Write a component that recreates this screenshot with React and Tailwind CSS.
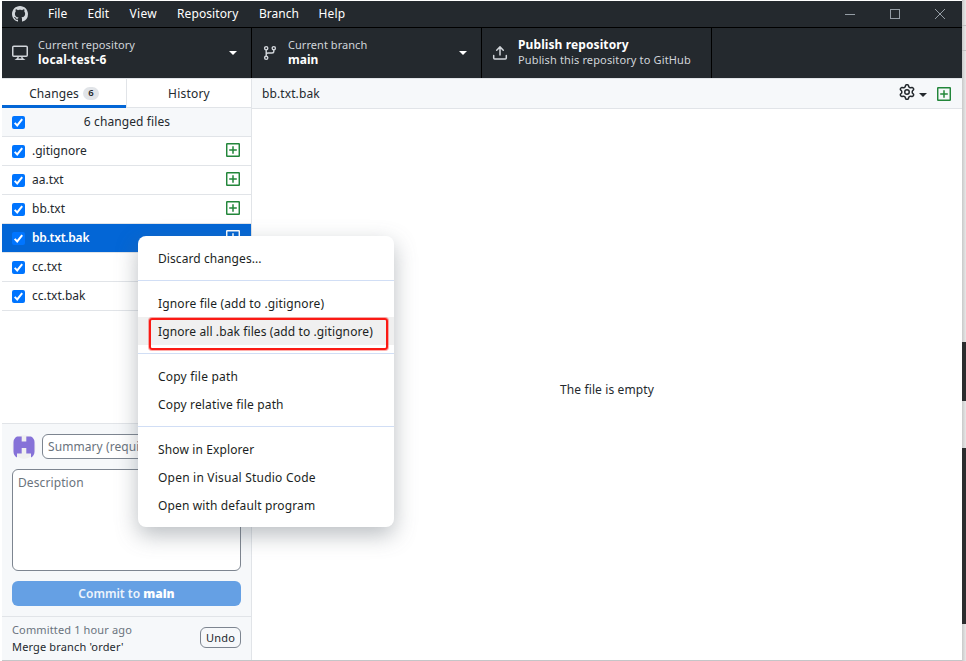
import React from 'react';

const GITHUB =
  'M8 0C3.58 0 0 3.58 0 8c0 3.54 2.29 6.53 5.47 7.59.4.07.55-.17.55-.38 0-.19-.01-.82-.01-1.49-2.01.37-2.53-.49-2.69-.94-.09-.23-.48-.94-.82-1.13-.28-.15-.68-.52-.01-.53.63-.01 1.08.58 1.23.82.72 1.21 1.87.87 2.33.66.07-.52.28-.87.51-1.07-1.78-.2-3.64-.89-3.64-3.95 0-.87.31-1.59.82-2.15-.08-.2-.36-1.02.08-2.12 0 0 .67-.21 2.2.82.64-.18 1.32-.27 2-.27.68 0 1.36.09 2 .27 1.53-1.04 2.2-.82 2.2-.82.44 1.1.16 1.92.08 2.12.51.56.82 1.27.82 2.15 0 3.07-1.87 3.75-3.65 3.95.29.25.54.73.54 1.48 0 1.07-.01 1.93-.01 2.2 0 .21.15.46.55.38A8.013 8.013 0 0016 8c0-4.42-3.58-8-8-8z';

const GEAR =
  'M8 0a8.2 8.2 0 0 1 .701.031C9.444.095 9.99.645 10.16 1.29l.288 1.107c.018.066.079.158.212.224.231.114.454.243.668.386.123.082.233.09.299.071l1.103-.303c.644-.176 1.392.021 1.82.63.27.385.506.792.704 1.218.315.675.111 1.422-.364 1.891l-.814.806c-.049.048-.098.147-.088.294.016.257.016.515 0 .772-.01.147.038.246.088.294l.814.806c.475.469.679 1.216.364 1.891a7.977 7.977 0 0 1-.704 1.217c-.428.61-1.176.807-1.82.63l-1.102-.302c-.067-.019-.177-.011-.3.071a5.909 5.909 0 0 1-.668.386c-.133.066-.194.158-.211.224l-.29 1.106c-.168.646-.715 1.196-1.458 1.26a8.006 8.006 0 0 1-1.402 0c-.743-.064-1.289-.614-1.458-1.26l-.289-1.106c-.018-.066-.079-.158-.212-.224a5.738 5.738 0 0 1-.668-.386c-.123-.082-.233-.09-.299-.071l-1.103.303c-.644.176-1.392-.021-1.82-.63a8.12 8.12 0 0 1-.704-1.218c-.315-.675-.111-1.422.363-1.891l.815-.806c.05-.048.098-.147.088-.294a6.214 6.214 0 0 1 0-.772c.01-.147-.038-.246-.088-.294l-.815-.806C.635 6.045.431 5.298.746 4.623a7.92 7.92 0 0 1 .704-1.217c.428-.61 1.176-.807 1.82-.63l1.102.302c.067.019.177.011.3-.071.214-.143.437-.272.668-.386.133-.066.194-.158.211-.224l.29-1.106C6.009.645 6.556.095 7.299.03 7.53.01 7.764 0 8 0Zm-.571 1.525c-.036.003-.108.036-.137.146l-.289 1.105c-.147.561-.549.967-.998 1.189-.173.086-.34.183-.5.29-.417.278-.97.423-1.529.27l-1.103-.303c-.109-.03-.175.016-.195.045-.22.312-.412.644-.573.99-.014.031-.021.11.059.19l.815.806c.411.406.562.957.53 1.456a4.709 4.709 0 0 0 0 .582c.032.499-.119 1.05-.53 1.456l-.815.806c-.081.08-.073.159-.059.19.162.346.353.677.573.989.02.03.085.076.195.046l1.102-.303c.56-.153 1.113-.008 1.53.27.161.107.328.204.501.29.447.222.85.629.997 1.189l.289 1.105c.029.109.101.143.137.146a6.6 6.6 0 0 0 1.142 0c.036-.003.108-.036.137-.146l.289-1.105c.147-.561.549-.967.998-1.189.173-.086.34-.183.5-.29.417-.278.97-.423 1.529-.27l1.103.303c.109.029.175-.016.195-.045.22-.313.411-.644.573-.99.014-.031.021-.11-.059-.19l-.815-.806c-.411-.406-.562-.957-.53-1.456a4.709 4.709 0 0 0 0-.582c-.032-.499.119-1.05.53-1.456l.815-.806c.081-.08.073-.159.059-.19a6.464 6.464 0 0 0-.573-.989c-.02-.03-.085-.076-.195-.046l-1.102.303c-.56.153-1.113.008-1.53-.27a4.44 4.44 0 0 0-.501-.29c-.447-.222-.85-.629-.997-1.189l-.289-1.105c-.029-.11-.101-.143-.137-.146a6.6 6.6 0 0 0-1.142 0ZM11 8a3 3 0 1 1-6 0 3 3 0 0 1 6 0ZM9.5 8a1.5 1.5 0 1 0-3.001.001A1.5 1.5 0 0 0 9.5 8Z';

function Caret() {
  return (
    <svg width="8" height="4" viewBox="0 0 8 4" fill="currentColor" className="block shrink-0">
      <path d="M0 0h8L4 4z" />
    </svg>
  );
}

function Added() {
  return (
    <svg width="14" height="14" viewBox="0 0 14 14" fill="none" stroke="currentColor" className="block shrink-0">
      <rect x="0.7" y="0.7" width="12.6" height="12.6" rx="0.8" strokeWidth="1.5" />
      <path d="M7 3.2v7.6M3.2 7h7.6" strokeWidth="1.5" />
    </svg>
  );
}

function Check() {
  return (
    <span className="flex size-[13px] shrink-0 items-center justify-center rounded-[2px] bg-[#0075ff]">
      <svg width="13" height="13" viewBox="0 0 13 13" fill="none" stroke="#fff" strokeWidth="2">
        <path d="M2.7 6.9l2.5 2.5 5-6.3" />
      </svg>
    </span>
  );
}

const menus = [
  ['File', 'w-[39.5px]'],
  ['Edit', 'w-[42px]'],
  ['View', 'w-[47.5px] tracking-[0.3px]'],
  ['Repository', 'w-[82px] tracking-[0.1px]'],
  ['Branch', 'w-[59.5px]'],
  ['Help', 'w-[40px] tracking-[0.2px]'],
];

const files = [
  { name: '.gitignore' },
  { name: 'aa.txt' },
  { name: 'bb.txt' },
  { name: 'bb.txt.bak', selected: true },
  { name: 'cc.txt' },
  { name: 'cc.txt.bak' },
];

const groups = [
  [['Discard changes...', 'tracking-[0.08px]']],
  [
    ['Ignore file (add to .gitignore)', 'tracking-[0.13px]'],
    ['Ignore all .bak files (add to .gitignore)', 'tracking-[0.1px]', true],
  ],
  [
    ['Copy file path', 'tracking-[0.2px]'],
    ['Copy relative file path', 'tracking-[0.16px]'],
  ],
  [
    ['Show in Explorer', 'tracking-[0.12px]'],
    ['Open in Visual Studio Code', 'tracking-[0.21px]'],
    ['Open with default program', 'tracking-[0.14px]'],
  ],
];

function TitleBar() {
  return (
    <div className="flex h-[27px] shrink-0 items-center border-b border-black bg-[#24292e] text-[12px] text-white">
      <svg width="16" height="16" viewBox="0 0 16 16" fill="#d1d5da" className="ml-[10px] mr-5 shrink-0">
        <path d={GITHUB} />
      </svg>
      {menus.map(([label, w]) => (
        <span key={label} className={`${w} shrink-0 whitespace-nowrap`}>
          {label}
        </span>
      ))}
      <svg width="102" height="12" viewBox="0 0 102 12" fill="none" stroke="#959da5" className="mb-px ml-auto mr-4">
        <path d="M1 6.5h10M91 1l10 10M101 1l-10 10" />
        <rect x="46.5" y="1.5" width="9" height="9" />
      </svg>
    </div>
  );
}

function Toolbar() {
  return (
    <div className="flex h-[50px] shrink-0 bg-[#24292e] text-[11px] leading-[15px] text-[#d1d5da]">
      <div className="flex w-[250px] items-center border-r border-black pl-[10px] pr-[14px]">
        <svg width="16" height="16" viewBox="0 0 16 16" fill="none" stroke="currentColor" strokeWidth="1.5" className="mr-[10px] shrink-0">
          <rect x="0.75" y="1.25" width="14.5" height="10" rx="1" />
          <path d="M6.3 11.5c0 1.3-.4 1.9-1.6 2.8h6.6c-1.2-.9-1.6-1.5-1.6-2.8" />
        </svg>
        <div className="mb-[2px] flex-1">
          <div className="tracking-[0.1px]">Current repository</div>
          <div className="text-[12px] font-bold tracking-[0.2px] text-white">local-test-6</div>
        </div>
        <span className="text-white"><Caret /></span>
      </div>
      <div className="flex w-[230px] items-center border-r border-black pl-[10px] pr-[14px]">
        <svg width="16" height="16" viewBox="0 0 16 16" fill="none" stroke="currentColor" strokeWidth="1.4" className="mr-[10px] shrink-0">
          <circle cx="4.2" cy="3.2" r="1.6" />
          <circle cx="11.8" cy="3.2" r="1.6" />
          <circle cx="4.2" cy="12.8" r="1.6" />
          <path d="M4.2 4.8v6.4M11.8 4.8v1.4a1.8 1.8 0 0 1-1.8 1.8H6a1.8 1.8 0 0 0-1.8 1.8" />
        </svg>
        <div className="mb-[2px] flex-1">
          <div className="tracking-[0.05px]">Current branch</div>
          <div className="text-[12px] font-bold text-white">main</div>
        </div>
        <span className="text-white"><Caret /></span>
      </div>
      <div className="flex w-[230px] items-center border-r border-black pl-[10px]">
        <svg width="16" height="16" viewBox="0 0 16 16" fill="none" stroke="currentColor" strokeWidth="1.5" strokeLinecap="round" strokeLinejoin="round" className="mr-[10px] shrink-0">
          <path d="M8 10V2.2M4.7 5.2L8 1.9l3.3 3.3M1.7 10.5v2.6c0 .6.4 1 1 1h10.6c.6 0 1-.4 1-1v-2.6" />
        </svg>
        <div className="mb-[2px]">
          <div className="pt-px text-[12px] font-bold leading-[14px] tracking-[0.1px] text-white">Publish repository</div>
          <div className="tracking-[0.14px]">Publish this repository to GitHub</div>
        </div>
      </div>
    </div>
  );
}

function Sidebar() {
  return (
    <div className="flex w-[250px] shrink-0 flex-col border-r border-[#e1e4e8] bg-white">
      <div className="flex h-[30px] shrink-0 border-t border-[#e1e4e8]">
        <div className="flex w-[124px] items-center justify-center gap-1 border-b-[3px] border-[#0366d6] pt-[3px]">
          <span className="tracking-[0.1px]">Changes</span>
          <span className="flex h-[13px] w-4 items-center justify-center rounded-full bg-[#e1e4e8] text-[9.5px] font-semibold">6</span>
        </div>
        <div className="flex flex-1 items-center justify-center border-b border-l border-[#e1e4e8] pt-[2px] tracking-[0.2px]">History</div>
      </div>
      <div className="flex h-[29px] shrink-0 items-center border-b border-[#e1e4e8] bg-[#f6f8fa] pl-[10px]">
        <Check />
        <span className="flex-1 pr-[22px] text-center tracking-[0.1px]">6 changed files</span>
      </div>
      {files.map((f) => (
        <div
          key={f.name}
          className={`flex h-[29px] shrink-0 items-center border-b border-[#e1e4e8] pl-[10px] pr-[11px] ${
            f.selected ? 'bg-[#0366d6] font-semibold text-white' : ''
          }`}
        >
          <Check />
          <span className={`ml-[7px] flex-1 ${f.selected ? 'tracking-[-0.25px]' : ''}`}>{f.name}</span>
          <span className={`mb-[2px] ${f.selected ? 'text-white' : 'text-[#22863a]'}`}>
            <Added />
          </span>
        </div>
      ))}
      <div className="flex-1" />
      <CommitForm />
      <div className="flex h-[44px] shrink-0 items-center justify-between border-t border-[#e1e4e8] bg-[#f6f8fa] pl-[10px] pr-[10px]">
        <div className="mb-px text-[11px] leading-[17px]">
          <div className="tracking-[0.14px] text-[#6a737d]">Committed 1 hour ago</div>
          <div className="tracking-[0.15px]">Merge branch 'order'</div>
        </div>
        <div className="mb-[2px] flex h-[21px] w-[41px] items-center justify-center rounded-[6px] border border-[#7d8590] bg-[#f6f8fa] pt-px text-[11px] tracking-[0.2px]">Undo</div>
      </div>
    </div>
  );
}

function CommitForm() {
  return (
    <div className="flex h-[193px] shrink-0 flex-col border-t border-[#e1e4e8] bg-[#f6f8fa] px-[10px] pt-[10px] text-[#6a737d]">
      <div className="flex shrink-0 items-center gap-[6px]">
        <svg width="24" height="24" viewBox="0 0 24 24" className="shrink-0">
          <circle cx="12" cy="12" r="11.7" fill="#f0f0f0" />
          <path d="M5 1.500H9.700V6.500H14.300V1.500H19q3.500 2 3.500 5.500v9.500q0 4-3.500 6V18.500h-4.700V13H9.700v5.500H5v4q-3.500-2-3.500-6V7q0-3.500 3.500-5.500z" fill="#8672d8" />
        </svg>
        <div className="flex h-[25px] flex-1 items-center overflow-hidden whitespace-nowrap rounded-[6px] border border-[#7d8590] bg-white pl-[5px] tracking-[0.08px]">
          Summary (required)
        </div>
      </div>
      <div className="mt-[10px] h-[102px] shrink-0 rounded-[6px] border border-[#7d8590] bg-white pl-[5px] pt-[4px] leading-[18px] tracking-[0.1px]">
        Description
      </div>
      <div className="mt-[10px] flex h-[25px] shrink-0 items-center justify-center rounded-[6px] bg-[#65a0e4] font-semibold text-[#edf4fc]">
        <span>
          Commit to <b className="text-white">main</b>
        </span>
      </div>
    </div>
  );
}

function DiffPane() {
  return (
    <div className="flex flex-1 flex-col bg-white">
      <div className="flex h-[31px] shrink-0 items-center border-b border-t border-[#e1e4e8] bg-[#f6f8fa] pl-[10px] pr-[11px]">
        <span className="flex-1 tracking-[0.1px]">bb.txt.bak</span>
        <svg width="16" height="16" viewBox="0 0 16 16" fill="#24292e" className="mb-[3px]">
          <path d={GEAR} />
        </svg>
        <span className="ml-[4px] mr-[10px] mt-[3px]"><Caret /></span>
        <span className="text-[#22863a]"><Added /></span>
      </div>
      <div className="flex flex-1 items-center justify-center pt-[10px] tracking-[0.12px]">The file is empty</div>
    </div>
  );
}

function ContextMenu() {
  return (
    <div className="absolute left-[138px] top-[236px] w-[256px] rounded-[8px] bg-white text-[12px] text-[#1b1f23] shadow-[0_8px_22px_rgba(90,100,110,0.42)]">
      {groups.map((items, i) => (
        <div key={i} className={`py-2 ${i ? 'border-t border-[#d1def5]' : ''}`}>
          {items.map(([label, track, active]) => (
            <div key={label} className={`flex h-7 items-center whitespace-nowrap pl-5 pt-[2px] ${track} ${active ? 'bg-[#f0f0f0]' : ''}`}>
              {label}
            </div>
          ))}
        </div>
      ))}
      <div className="absolute left-[11px] top-[82px] h-[32px] w-[239px] rounded-[3px] border-2 border-[#fb1a14] shadow-[0_0_0_1px_rgba(251,26,20,0.35)]" />
    </div>
  );
}

export default function App() {
  return (
    <div className="relative flex h-[661px] w-[966px] overflow-hidden bg-white pl-[2px] pt-px text-[12px] text-[#24292e] [font-family:'Noto_Sans','Open_Sans',sans-serif]">
      <div className="flex h-[660px] w-[960px] flex-col border-b border-[#c4c6c8]">
        <TitleBar />
        <Toolbar />
        <div className="flex min-h-0 flex-1">
          <Sidebar />
          <DiffPane />
        </div>
      </div>
      <div className="-mt-px flex w-1 flex-col bg-gradient-to-r from-[#c9c9c9] to-[#e8e8e8]">
        <div className="h-[26px] border-b border-[#c0c0c0]" />
        <div className="h-[25px] border-b border-[#c0c0c0]" />
        <div className="mt-[291px] h-[59px] bg-[#2b2d2e]" />
        <div className="mt-[47px] h-[176px] bg-[#2b2d2e]" />
      </div>
      <ContextMenu />
    </div>
  );
}
